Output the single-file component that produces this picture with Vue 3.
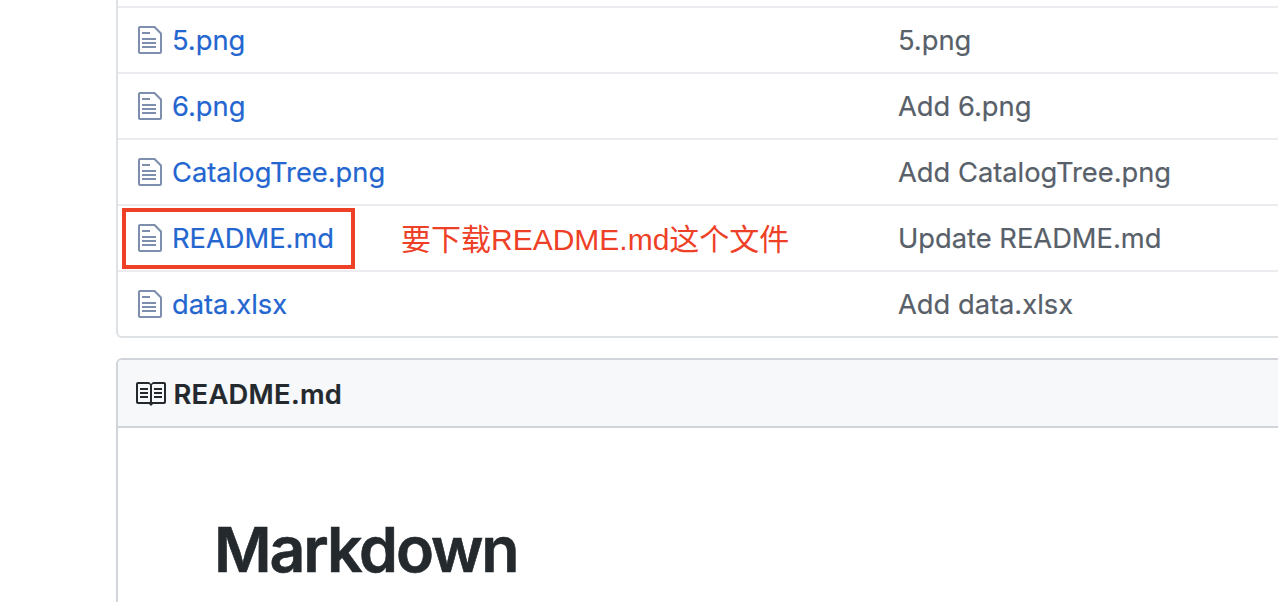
<script setup>
const files = [
  { name: '5.png', message: '5.png' },
  { name: '6.png', message: 'Add 6.png' },
  { name: 'CatalogTree.png', message: 'Add CatalogTree.png' },
  { name: 'README.md', message: 'Update README.md', note: '要下载README.md这个文件' },
  { name: 'data.xlsx', message: 'Add data.xlsx' },
]
</script>

<template>
  <main class="page">
    <section class="files">
      <div v-for="file in files" :key="file.name" class="row">
        <svg class="file-icon" viewBox="0 0 12 16" width="24" height="32" aria-hidden="true">
          <path fill-rule="evenodd" d="M6 5H2V4h4v1zM2 8h7V7H2v1zm0 2h7V9H2v1zm0 2h7v-1H2v1zm10-7.5V14c0 .55-.45 1-1 1H1c-.55 0-1-.45-1-1V2c0-.55.45-1 1-1h7.5L12 4.5zM11 5L8 2H1v12h10V5z" />
        </svg>
        <div class="name"><a>{{ file.name }}</a></div>
        <div class="message">{{ file.message }}</div>
        <template v-if="file.note">
          <div class="marker"></div>
          <div class="note">{{ file.note }}</div>
        </template>
      </div>
    </section>

    <section class="readme">
      <header class="readme-head">
        <svg class="book-icon" viewBox="0 0 16 16" width="32" height="32" aria-hidden="true">
          <path fill-rule="evenodd" d="M3 5h4v1H3V5zm0 3h4V7H3v1zm0 2h4V9H3v1zm11-5h-4v1h4V5zm0 2h-4v1h4V7zm0 2h-4v1h4V9zm2-6v9c0 .55-.45 1-1 1H9.5l-1 1-1-1H2c-.55 0-1-.45-1-1V3c0-.55.45-1 1-1h5.5l1 1 1-1H15c.55 0 1 .45 1 1zm-8 .5L7.5 3H2v9h6V3.5zm7-.5H9.5l-.5.5V12h6V3z" />
        </svg>
        <h3>README.md</h3>
      </header>
      <div class="readme-body">
        <h1>Markdown</h1>
      </div>
    </section>
  </main>
</template>

<style>
body {
  background: #fff;
  overflow: hidden;
}
</style>

<style scoped>
.page {
  box-sizing: border-box;
  height: 602px;
  padding-left: 116px;
  overflow: hidden;
  font-family: Inter, "Liberation Sans", sans-serif;
  font-size: 27.3px;
  font-weight: 400;
  color: #24292e;
}
.files {
  box-sizing: border-box;
  height: 338px;
  padding-top: 6px;
  border: 2px solid #dfe2e5;
  border-width: 0 0 2px 2px;
  border-bottom-left-radius: 6px;
}
.row {
  position: relative;
  box-sizing: border-box;
  display: grid;
  grid-template-columns: 24px 736px 1fr;
  align-items: center;
  height: 66px;
  padding-left: 20px;
  border-top: 2px solid #eaecef;
  line-height: 42px;
  white-space: nowrap;
}
.file-icon {
  fill: #7d8fac;
}
.name {
  padding: 1px 0 0 10px;
  color: #2466d0;
  -webkit-text-stroke: 0.2px #2466d0;
}
.message {
  padding-top: 1px;
  color: #586069;
  -webkit-text-stroke: 0.2px #586069;
}
.marker {
  position: absolute;
  box-sizing: border-box;
  left: 4px;
  top: 2px;
  width: 233px;
  height: 61px;
  border: 4px solid #ee4027;
}
.note {
  position: absolute;
  left: 283px;
  top: 13px;
  font-family: "Liberation Sans", "Noto Sans CJK SC", sans-serif;
  font-size: 30px;
  color: #ee4027;
}
.readme {
  margin-top: 20px;
  height: 300px;
  border: 2px solid #d1d5da;
  border-width: 2px 0 0 2px;
  border-top-left-radius: 6px;
}
.readme-head {
  box-sizing: border-box;
  display: flex;
  align-items: center;
  height: 68px;
  padding-left: 16px;
  background: #f6f8fa;
  border-bottom: 2px solid #d1d5da;
  border-top-left-radius: 4px;
}
.book-icon {
  margin-top: 2px;
  fill: #24292e;
}
h3 {
  margin: 0 0 0 7.5px;
  padding-top: 3px;
  font-size: 27.3px;
  font-weight: 600;
  letter-spacing: 0.3px;
  line-height: 42px;
  -webkit-text-stroke: 0.2px #24292e;
}
.readme-body {
  padding: 81px 0 0 96px;
}
h1 {
  margin: 0;
  font-size: 62.5px;
  font-weight: 600;
  letter-spacing: -2.1px;
  line-height: 80px;
  -webkit-text-stroke: 0.6px #24292e;
}
</style>
